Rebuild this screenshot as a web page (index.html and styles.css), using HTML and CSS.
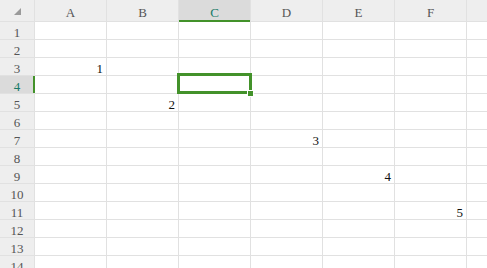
FILE: index.html
```html
<!DOCTYPE html>
<html lang="en">
<head>
  <meta charset="UTF-8">
  <title>Sheet1</title>
  <link rel="stylesheet" href="styles.css">
</head>
<body>
  <div class="sheet" id="sheet">
    <div class="corner"><span class="tri"></span></div>
  </div>

  <script>
    const cols = ['A', 'B', 'C', 'D', 'E', 'F', 'G'];
    const rowCount = 14;
    const values = { A3: 1, B5: 2, D7: 3, E9: 4, F11: 5 };
    const active = { col: 'C', row: 4 };

    const sheet = document.getElementById('sheet');

    cols.forEach(c => {
      const head = document.createElement('div');
      head.className = 'col-head' + (c === active.col ? ' active' : '');
      head.textContent = c;
      sheet.appendChild(head);
    });

    for (let r = 1; r <= rowCount; r++) {
      const head = document.createElement('div');
      head.className = 'row-head' + (r === active.row ? ' active' : '');
      head.textContent = r;
      sheet.appendChild(head);
      cols.forEach(c => {
        const cell = document.createElement('div');
        cell.className = 'cell';
        const v = values[c + r];
        if (v !== undefined) cell.textContent = v;
        sheet.appendChild(cell);
      });
    }

    const sel = document.createElement('div');
    sel.className = 'selection';
    sheet.appendChild(sel);
    const handle = document.createElement('div');
    handle.className = 'fill-handle';
    sheet.appendChild(handle);
  </script>
</body>
</html>
```

FILE: styles.css
```css
* {
  box-sizing: border-box;
}

body {
  margin: 0;
  padding: 0;
  font-family: 'Liberation Serif', serif;
  font-size: 13px;
  background: #fff;
}

.sheet {
  position: relative;
  display: grid;
  grid-template-columns: 34px repeat(7, 71px);
  grid-template-rows: 21px repeat(14, 17px);
  gap: 1px;
  background: #e1e1e1;
  width: 487px;
  height: 268px;
  overflow: hidden;
}

.corner {
  background: #eeeeee;
  display: flex;
  justify-content: center;
  align-items: center;
  padding-top: 2px;
}

.tri {
  width: 0;
  height: 0;
  border-left: 7px solid transparent;
  border-bottom: 7px solid #9a9a9a;
}

.col-head {
  background: #eeeeee;
  color: #555;
  display: flex;
  justify-content: center;
  align-items: center;
  padding-top: 4px;
}

.col-head.active {
  background: #dbdbdb;
  color: #177a68;
  box-shadow: inset 0 -1px 0 #43922a, 0 1px 0 #43922a;
}

.row-head {
  background: #eeeeee;
  color: #555;
  display: flex;
  justify-content: center;
  align-items: flex-end;
  line-height: 12px;
  padding-bottom: 0;
}

.row-head.active {
  background: #dbdbdb;
  color: #177a68;
  box-shadow: inset -1px 0 0 #43922a, 1px 0 0 #43922a;
}

.cell {
  background: #fff;
  color: #111;
  display: flex;
  justify-content: flex-end;
  align-items: flex-end;
  line-height: 12px;
  padding-right: 3px;
  padding-bottom: 0;
}

.selection {
  position: absolute;
  left: 177px;
  top: 73px;
  width: 75px;
  height: 21px;
  border: 3px solid #43922a;
}

.fill-handle {
  position: absolute;
  left: 247px;
  top: 90px;
  width: 7px;
  height: 7px;
  background: #43922a;
  border: 1px solid #fff;
}
```
